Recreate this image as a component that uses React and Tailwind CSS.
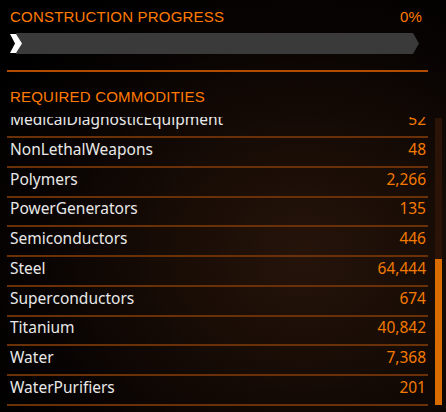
import React from 'react';

const rows = [
  ['MedicalDiagnosticEquipment', '52'],
  ['NonLethalWeapons', '48'],
  ['Polymers', '2,266'],
  ['PowerGenerators', '135'],
  ['Semiconductors', '446'],
  ['Steel', '64,444'],
  ['Superconductors', '674'],
  ['Titanium', '40,842'],
  ['Water', '7,368'],
  ['WaterPurifiers', '201'],
];

export default function App() {
  return (
    <div className="w-[446px] h-[412px] overflow-hidden bg-black bg-[radial-gradient(ellipse_at_68%_62%,#26140a_0%,#160b05_35%,#070302_65%,#000_85%)] font-['Noto_Sans',sans-serif]">
      {/* Progress header */}
      <div className="flex justify-between pl-[10px] pr-[24px] pt-[8px] h-[26px] font-['Liberation_Sans',sans-serif] text-[15px] leading-[17px] text-[#ff7a00] tracking-[0.2px]">
        <span>CONSTRUCTION PROGRESS</span>
        <span>0%</span>
      </div>

      <div className="pl-[10px] mt-[7px] h-[21px]">
        <svg width="412" height="21" viewBox="0 0 412 21">
          <polygon points="6,0 403,0 409,10.5 403,21 6,21" fill="#3a3a3a" />
          <polygon points="0,1 6,1 12,10.5 6,20 0,20 5,10.5" fill="#ffffff" />
        </svg>
      </div>

      <div className="ml-[7px] w-[421px] h-[2px] mt-[16px] bg-[#b34c00]" />

      <div className="pl-[10px] mt-[16px] h-[20px] font-['Liberation_Sans',sans-serif] text-[15px] leading-[17px] text-[#ff7a00] tracking-[0.2px]">
        REQUIRED COMMODITIES
      </div>

      {/* Commodity list */}
      <div className="flex mt-[9px]">
        <div className="ml-[7px] w-[421px] h-[295px] overflow-hidden">
          <div className="mt-[-8.75px]">
            {rows.map(([name, qty]) => (
              <div
                key={name}
                className="flex items-center justify-between h-[29.75px] pb-[5px] pl-[3px] pr-[2px] border-b-2 border-[#6a3008] text-[15.5px]"
              >
                <span className="text-[#e8e8e8] whitespace-nowrap">{name}</span>
                <span className="text-[#f47a00]">{qty}</span>
              </div>
            ))}
          </div>
        </div>

        {/* Scrollbar */}
        <div className="ml-[7px] mt-[1px] w-[7px] h-[287px] bg-[#2b1407] flex flex-col justify-end">
          <div className="h-[146px] bg-[#d96c00]" />
        </div>
      </div>
    </div>
  );
}
